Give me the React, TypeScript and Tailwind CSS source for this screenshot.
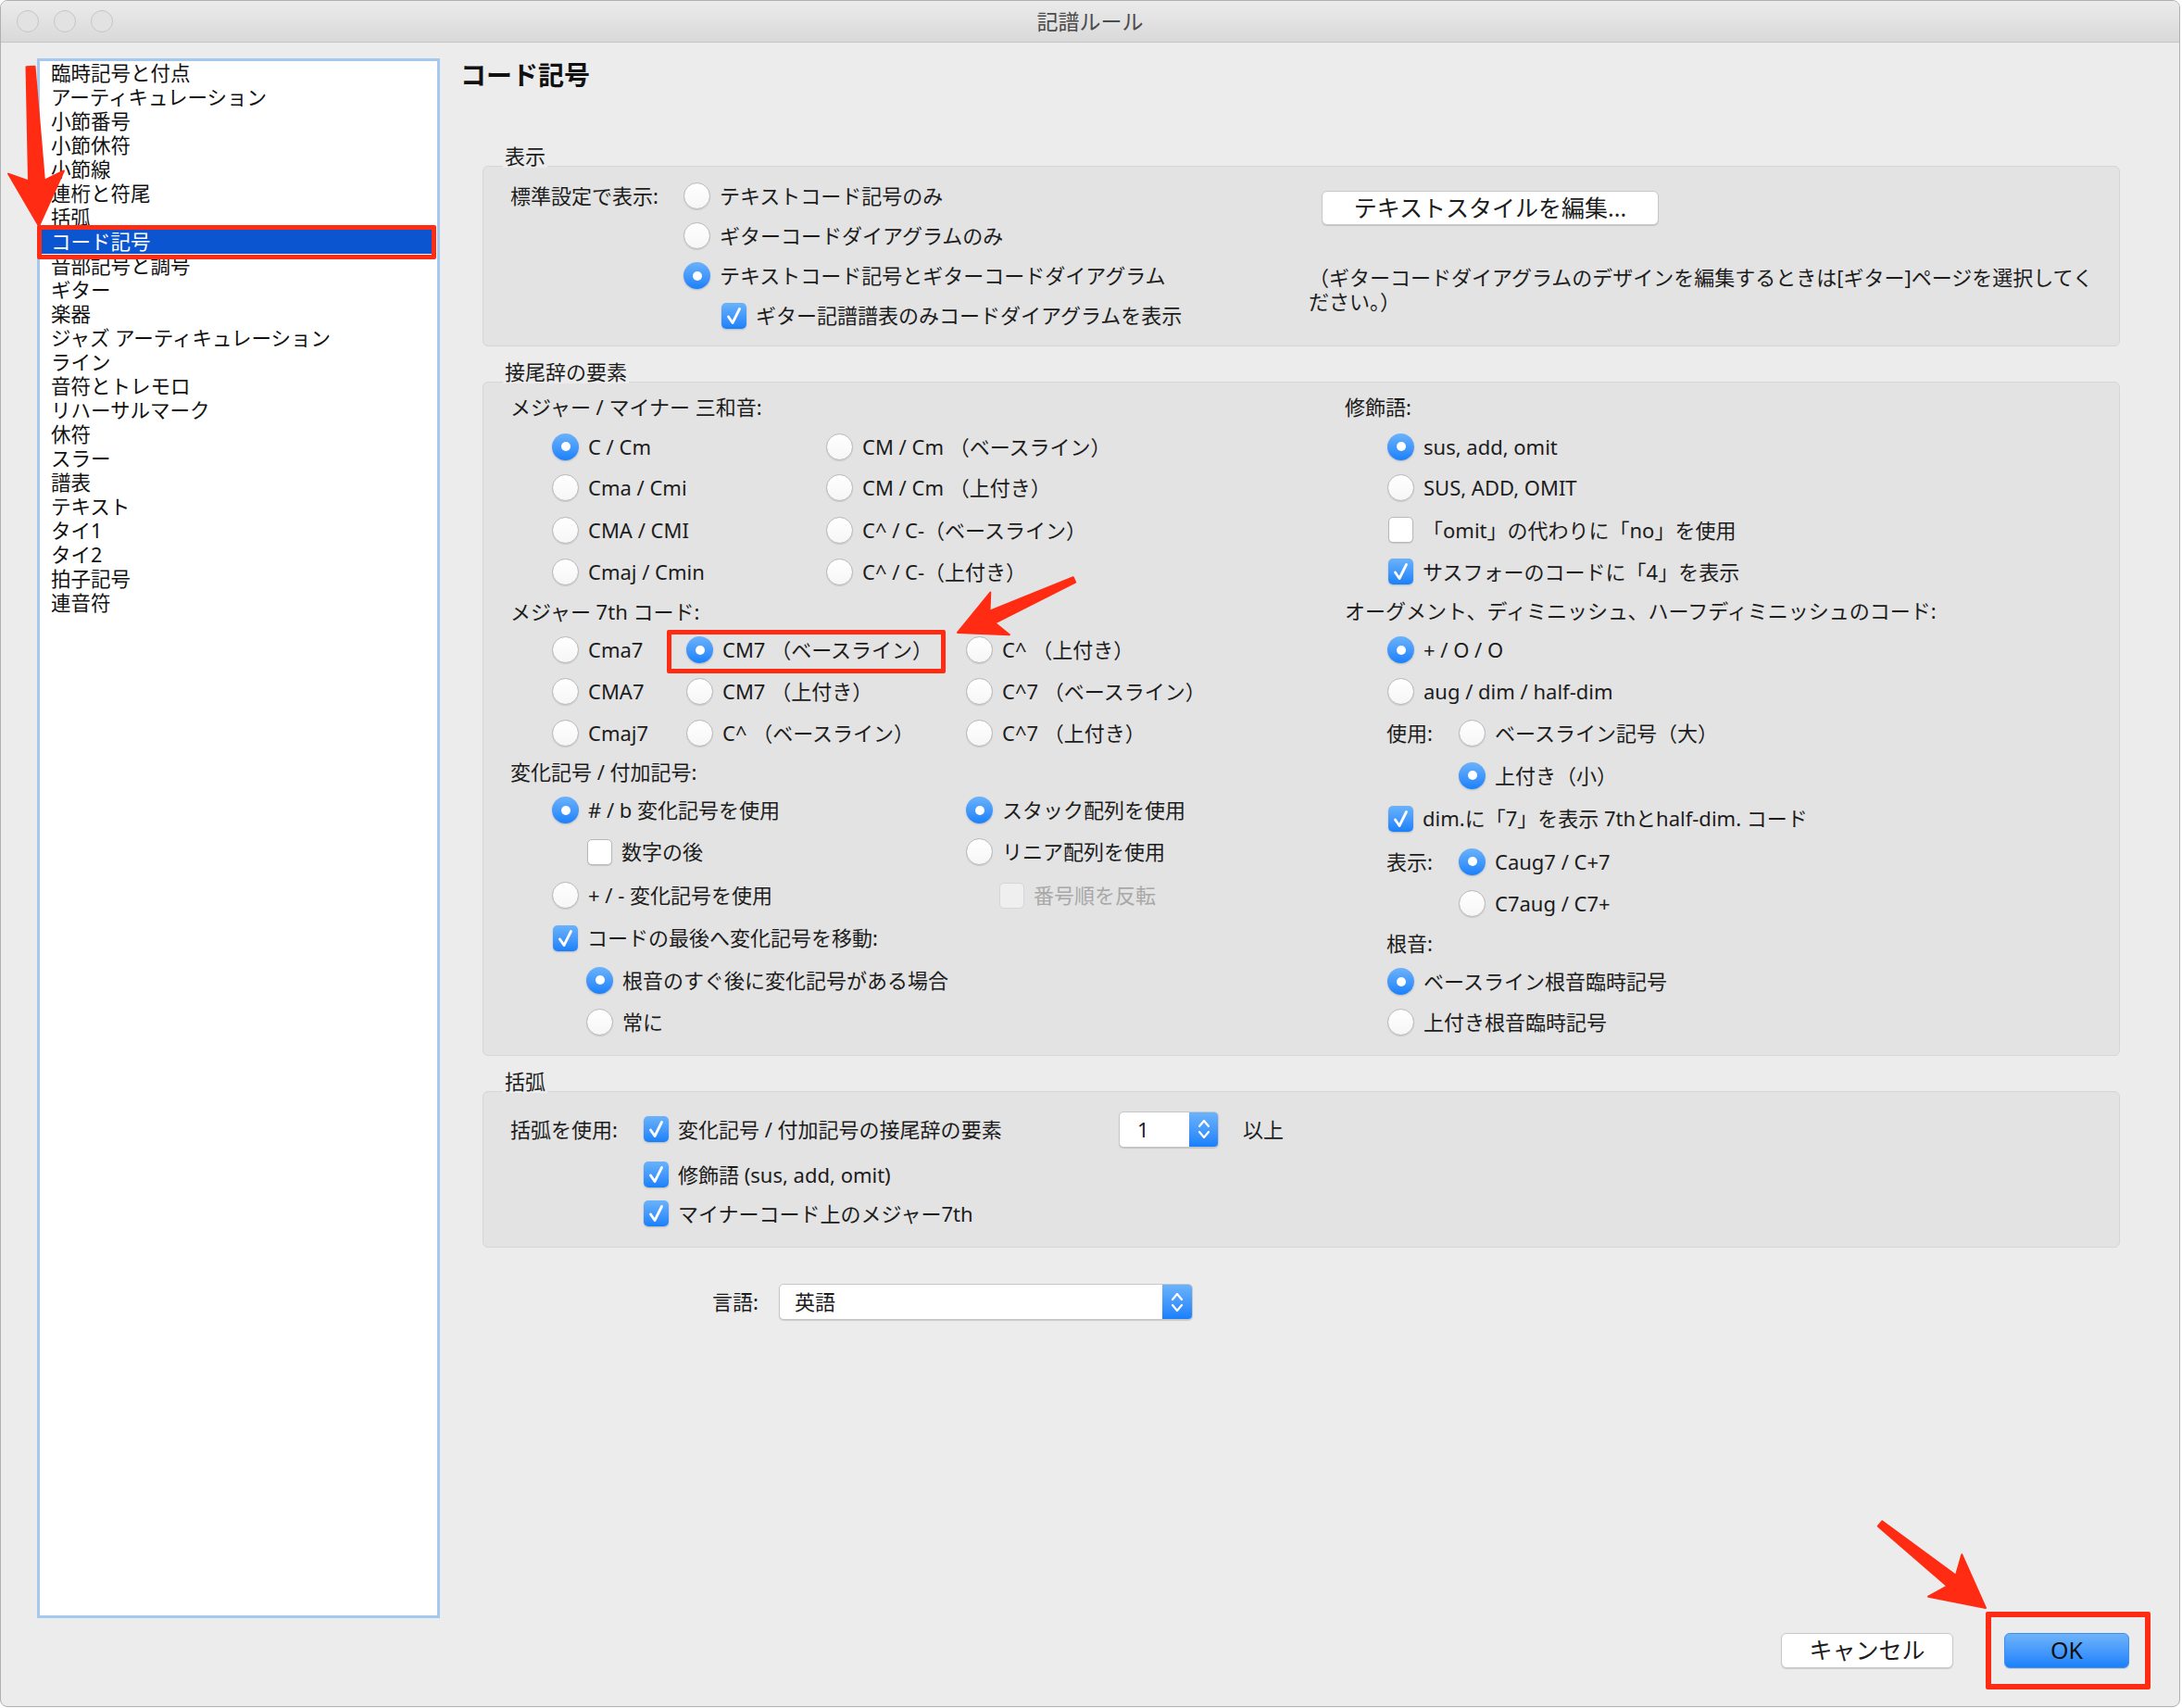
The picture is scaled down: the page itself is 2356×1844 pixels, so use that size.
import React from "react";

const items = [
  "臨時記号と付点",
  "アーティキュレーション",
  "小節番号",
  "小節休符",
  "小節線",
  "連桁と符尾",
  "括弧",
  "コード記号",
  "音部記号と調号",
  "ギター",
  "楽器",
  "ジャズ アーティキュレーション",
  "ライン",
  "音符とトレモロ",
  "リハーサルマーク",
  "休符",
  "スラー",
  "譜表",
  "テキスト",
  "タイ1",
  "タイ2",
  "拍子記号",
  "連音符",
];

function Radio({ on }: { on?: boolean }) {
  if (on)
    return (
      <span className="flex h-[29px] w-[29px] shrink-0 items-center justify-center rounded-full bg-linear-to-b from-[#6ab2fb] to-[#1780fb] shadow-[0_1px_2px_rgba(0,0,0,0.2)]">
        <span className="h-[10px] w-[10px] rounded-full bg-white" />
      </span>
    );
  return (
    <span className="h-[29px] w-[29px] shrink-0 rounded-full border border-[#b8b8b8] bg-linear-to-b from-white to-[#f6f6f6] shadow-[0_1px_1px_rgba(0,0,0,0.12)]" />
  );
}

function Check({ on, dis }: { on?: boolean; dis?: boolean }) {
  if (on)
    return (
      <span className="flex h-[28px] w-[27px] shrink-0 items-center justify-center rounded-[5px] bg-linear-to-b from-[#6ab2fb] to-[#1780fb] shadow-[0_1px_2px_rgba(0,0,0,0.2)]">
        <svg width="27" height="28" viewBox="0 0 27 28">
          <path d="M7.5 15 L12 21.5 L19.5 6.5" fill="none" stroke="white" strokeWidth="2.8" strokeLinecap="round" strokeLinejoin="round" />
        </svg>
      </span>
    );
  if (dis)
    return <span className="h-[28px] w-[27px] shrink-0 rounded-[5px] border border-[#d6d6d6] bg-[#efefef]" />;
  return (
    <span className="h-[28px] w-[27px] shrink-0 rounded-[5px] border border-[#b8b8b8] bg-white shadow-[0_1px_1px_rgba(0,0,0,0.12)]" />
  );
}

function Opt({ r, on, dis, children }: { r?: boolean; on?: boolean; dis?: boolean; children: React.ReactNode }) {
  return (
    <div className="flex items-center">
      {r ? <Radio on={on} /> : <Check on={on} dis={dis} />}
      <span className={dis ? "ml-[10px] whitespace-nowrap text-[#a8a8a8]" : "ml-[10px] whitespace-nowrap"}>{children}</span>
    </div>
  );
}

function Chevrons() {
  return (
    <svg width="18" height="30" viewBox="0 0 18 30">
      <path d="M4 12 L9 6 L14 12" fill="none" stroke="white" strokeWidth="2.2" strokeLinecap="round" strokeLinejoin="round" />
      <path d="M4 18 L9 24 L14 18" fill="none" stroke="white" strokeWidth="2.2" strokeLinecap="round" strokeLinejoin="round" />
    </svg>
  );
}

function Section({ label, box, gap, children }: { label: string; box: string; gap: string; children: React.ReactNode }) {
  return (
    <div className={`ml-[24px] w-[1768px] ${gap}`}>
      <div className="relative z-10 ml-[22px] w-fit bg-[#ececec] px-[2px] leading-[26px]">{label}</div>
      <div className={`-mt-[2px] rounded-[6px] border border-[#d6d6d6] bg-[#e3e3e3] ${box}`}>{children}</div>
    </div>
  );
}

function arrow(tx: number, ty: number, hx: number, hy: number, headLen: number, headW: number, tailW: number, neckW: number) {
  const L = Math.hypot(hx - tx, hy - ty);
  const ux = (hx - tx) / L;
  const uy = (hy - ty) / L;
  const px = -uy;
  const py = ux;
  const bx = hx - ux * headLen;
  const by = hy - uy * headLen;
  const nx = bx + ux * 9;
  const ny = by + uy * 9;
  const p = (x: number, y: number) => `${x.toFixed(1)},${y.toFixed(1)}`;
  return [
    p(tx + (px * tailW) / 2, ty + (py * tailW) / 2),
    p(nx + (px * neckW) / 2, ny + (py * neckW) / 2),
    p(bx + (px * headW) / 2, by + (py * headW) / 2),
    p(hx, hy),
    p(bx - (px * headW) / 2, by - (py * headW) / 2),
    p(nx - (px * neckW) / 2, ny - (py * neckW) / 2),
    p(tx - (px * tailW) / 2, ty - (py * tailW) / 2),
  ].join(" ");
}

export default function App() {
  return (
    <div className="relative h-[1844px] w-[2356px] overflow-hidden bg-white font-['Noto_Sans','Noto_Sans_CJK_JP',sans-serif] text-[22px] text-[#1c1c1c]">
      <div className="flex h-[1843px] w-[2354px] flex-col overflow-hidden rounded-[8px] border border-[#b0b0b0] bg-[#ececec]">
        {/* title bar */}
        <div className="relative flex h-[45px] shrink-0 items-center border-b border-[#c4c4c4] bg-linear-to-b from-[#ebebeb] to-[#d9d9d9]">
          <div className="ml-[17px] flex gap-[16px]">
            <span className="h-[24px] w-[24px] rounded-full border border-[#c6c6c6] bg-[#e2e2e2]" />
            <span className="h-[24px] w-[24px] rounded-full border border-[#c6c6c6] bg-[#e2e2e2]" />
            <span className="h-[24px] w-[24px] rounded-full border border-[#c6c6c6] bg-[#e2e2e2]" />
          </div>
          <div className="absolute inset-x-0 text-center text-[23px] leading-[45px] text-[#4b4b4b]">記譜ルール</div>
        </div>

        <div className="flex flex-1">
          {/* sidebar list */}
          <div className="ml-[39px] mt-[17px] h-[1684px] w-[435px] shrink-0 border-[3px] border-[#a5c8ef] bg-white">
            {items.map((it) => (
              <div
                key={it}
                className={
                  it === "コード記号"
                    ? "mx-[2px] h-[26px] whitespace-nowrap bg-[#0b55d1] pl-[10px] text-[21.5px] leading-[26px] text-white"
                    : "h-[26px] whitespace-nowrap pl-[12px] text-[21.5px] leading-[26px] text-[#111]"
                }
              >
                {it}
              </div>
            ))}
          </div>

          {/* main panel */}
          <div className="flex flex-1 flex-col pl-[22px]">
            <div className="mt-[17px] text-[28px] font-bold leading-[36px] text-[#111]">コード記号</div>

            <Section label="表示" gap="mt-[56px]" box="h-[195px]">
              <div className="flex">
                <div className="w-[891px] shrink-0 pl-[29px] pt-[10px]">
                  <div className="flex h-[43px] items-center">
                    <span className="w-[187px] shrink-0">標準設定で表示:</span>
                    <Opt r>テキストコード記号のみ</Opt>
                  </div>
                  <div className="flex h-[43px] items-center pl-[187px]">
                    <Opt r>ギターコードダイアグラムのみ</Opt>
                  </div>
                  <div className="flex h-[43px] items-center pl-[187px]">
                    <Opt r on>テキストコード記号とギターコードダイアグラム</Opt>
                  </div>
                  <div className="flex h-[43px] items-center pl-[228px]">
                    <Opt on>ギター記譜譜表のみコードダイアグラムを表示</Opt>
                  </div>
                </div>
                <div className="flex flex-col pt-[26px]">
                  <div className="ml-[14px] flex h-[37px] w-[364px] items-center justify-center rounded-[6px] border border-[#c8c8c8] bg-white text-[25px] shadow-[0_1px_1px_rgba(0,0,0,0.15)]">
                    テキストスタイルを編集...
                  </div>
                  <div className="mt-[43px] leading-[26px]">
                    <div className="whitespace-nowrap">（ギターコードダイアグラムのデザインを編集するときは[ギター]ページを選択してく</div>
                    <div>ださい。）</div>
                  </div>
                </div>
              </div>
            </Section>

            <Section label="接尾辞の要素" gap="mt-[14px]" box="h-[728px]">
              <div className="flex pl-[29px] pt-[6px]">
                {/* left column */}
                <div className="w-[901px] shrink-0">
                  <div className="flex h-[41px] items-center">メジャー / マイナー 三和音:</div>
                  <div className="flex h-[44px] items-center pl-[45px]">
                    <div className="w-[296px]"><Opt r on>C / Cm</Opt></div>
                    <Opt r>CM / Cm （ベースライン）</Opt>
                  </div>
                  <div className="flex h-[45px] items-center pl-[45px]">
                    <div className="w-[296px]"><Opt r>Cma / Cmi</Opt></div>
                    <Opt r>CM / Cm （上付き）</Opt>
                  </div>
                  <div className="flex h-[46px] items-center pl-[45px]">
                    <div className="w-[296px]"><Opt r>CMA / CMI</Opt></div>
                    <Opt r>C^ / C-（ベースライン）</Opt>
                  </div>
                  <div className="flex h-[45px] items-center pl-[45px]">
                    <div className="w-[296px]"><Opt r>Cmaj / Cmin</Opt></div>
                    <Opt r>C^ / C-（上付き）</Opt>
                  </div>
                  <div className="flex h-[40px] items-center">メジャー 7th コード:</div>
                  <div className="flex h-[43px] items-center pl-[45px]">
                    <div className="w-[145px]"><Opt r>Cma7</Opt></div>
                    <div className="w-[302px]"><Opt r on>CM7 （ベースライン）</Opt></div>
                    <Opt r>C^ （上付き）</Opt>
                  </div>
                  <div className="flex h-[46px] items-center pl-[45px]">
                    <div className="w-[145px]"><Opt r>CMA7</Opt></div>
                    <div className="w-[302px]"><Opt r>CM7 （上付き）</Opt></div>
                    <Opt r>C^7 （ベースライン）</Opt>
                  </div>
                  <div className="flex h-[45px] items-center pl-[45px]">
                    <div className="w-[145px]"><Opt r>Cmaj7</Opt></div>
                    <div className="w-[302px]"><Opt r>C^ （ベースライン）</Opt></div>
                    <Opt r>C^7 （上付き）</Opt>
                  </div>
                  <div className="flex h-[39px] items-center">変化記号 / 付加記号:</div>
                  <div className="flex h-[43px] items-center pl-[45px]">
                    <div className="w-[447px]"><Opt r on># / b 変化記号を使用</Opt></div>
                    <Opt r on>スタック配列を使用</Opt>
                  </div>
                  <div className="flex h-[47px] items-center pl-[83px]">
                    <div className="w-[409px]"><Opt>数字の後</Opt></div>
                    <Opt r>リニア配列を使用</Opt>
                  </div>
                  <div className="flex h-[47px] items-center pl-[45px]">
                    <div className="w-[483px]"><Opt r>+ / - 変化記号を使用</Opt></div>
                    <Opt dis>番号順を反転</Opt>
                  </div>
                  <div className="flex h-[45px] items-center pl-[46px]">
                    <Opt on>コードの最後へ変化記号を移動:</Opt>
                  </div>
                  <div className="flex h-[46px] items-center pl-[82px]">
                    <Opt r on>根音のすぐ後に変化記号がある場合</Opt>
                  </div>
                  <div className="flex h-[44px] items-center pl-[82px]">
                    <Opt r>常に</Opt>
                  </div>
                </div>

                {/* right column */}
                <div className="flex-1">
                  <div className="flex h-[41px] items-center">修飾語:</div>
                  <div className="flex h-[44px] items-center pl-[46px]"><Opt r on>sus, add, omit</Opt></div>
                  <div className="flex h-[45px] items-center pl-[46px]"><Opt r>SUS, ADD, OMIT</Opt></div>
                  <div className="flex h-[46px] items-center pl-[47px]"><Opt>「omit」の代わりに「no」を使用</Opt></div>
                  <div className="flex h-[44px] items-center pl-[47px]"><Opt on>サスフォーのコードに「4」を表示</Opt></div>
                  <div className="flex h-[41px] items-center whitespace-nowrap">オーグメント、ディミニッシュ、ハーフディミニッシュのコード:</div>
                  <div className="flex h-[43px] items-center pl-[46px]"><Opt r on>+ / O / O</Opt></div>
                  <div className="flex h-[46px] items-center pl-[46px]"><Opt r>aug / dim / half-dim</Opt></div>
                  <div className="flex h-[45px] items-center pl-[45px]">
                    <span className="w-[78px] shrink-0">使用:</span>
                    <Opt r>ベースライン記号（大）</Opt>
                  </div>
                  <div className="flex h-[46px] items-center pl-[123px]"><Opt r on>上付き（小）</Opt></div>
                  <div className="flex h-[47px] items-center pl-[47px]"><Opt on>dim.に「7」を表示 7thとhalf-dim. コード</Opt></div>
                  <div className="flex h-[46px] items-center pl-[45px]">
                    <span className="w-[78px] shrink-0">表示:</span>
                    <Opt r on>Caug7 / C+7</Opt>
                  </div>
                  <div className="flex h-[45px] items-center pl-[123px]"><Opt r>C7aug / C7+</Opt></div>
                  <div className="flex h-[40px] items-center pl-[45px]">根音:</div>
                  <div className="flex h-[43px] items-center pl-[46px]"><Opt r on>ベースライン根音臨時記号</Opt></div>
                  <div className="flex h-[44px] items-center pl-[46px]"><Opt r>上付き根音臨時記号</Opt></div>
                </div>
              </div>
            </Section>

            <Section label="括弧" gap="mt-[14px]" box="h-[169px]">
              <div className="pl-[29px] pt-[18px]">
                <div className="flex h-[44px] items-center">
                  <span className="w-[144px] shrink-0">括弧を使用:</span>
                  <div className="w-[513px] shrink-0"><Opt on>変化記号 / 付加記号の接尾辞の要素</Opt></div>
                  <div className="flex h-[39px] w-[108px] overflow-hidden rounded-[5px] border border-[#c6c6c6] bg-white shadow-[0_1px_1px_rgba(0,0,0,0.15)]">
                    <span className="flex-1 pl-[19px] leading-[37px]">1</span>
                    <span className="flex w-[31px] items-center justify-center bg-linear-to-b from-[#6ab2fb] to-[#1780fb]"><Chevrons /></span>
                  </div>
                  <span className="ml-[26px]">以上</span>
                </div>
                <div className="flex h-[54px] items-center pl-[144px]"><Opt on>修飾語 (sus, add, omit)</Opt></div>
                <div className="flex h-[30px] items-center pl-[144px]"><Opt on>マイナーコード上のメジャー7th</Opt></div>
              </div>
            </Section>

            <div className="mt-[39px] flex h-[39px] items-center pl-[272px]">
              <span className="w-[72px] shrink-0">言語:</span>
              <div className="flex h-[39px] w-[447px] overflow-hidden rounded-[5px] border border-[#c6c6c6] bg-white shadow-[0_1px_1px_rgba(0,0,0,0.15)]">
                <span className="flex-1 pl-[16px] leading-[37px]">英語</span>
                <span className="flex w-[32px] items-center justify-center bg-linear-to-b from-[#6ab2fb] to-[#1780fb]"><Chevrons /></span>
              </div>
            </div>

            <div className="flex-1" />

            <div className="mb-[41px] flex justify-end gap-[55px] pr-[54px]">
              <div className="flex h-[38px] w-[186px] items-center justify-center rounded-[6px] border border-[#c8c8c8] bg-white text-[25px] shadow-[0_1px_1px_rgba(0,0,0,0.15)]">
                キャンセル
              </div>
              <div className="flex h-[38px] w-[135px] items-center justify-center rounded-[6px] border border-[#3d8ef0] bg-linear-to-b from-[#6db3fa] to-[#1780fb] text-[25px] text-[#111] shadow-[0_1px_1px_rgba(0,0,0,0.15)]">
                OK
              </div>
            </div>
          </div>
        </div>
      </div>

      {/* annotations */}
      <div className="absolute left-[40px] top-[243px] h-[37px] w-[431px] rounded-[2px] border-[5px] border-[#ff2b12]" />
      <div className="absolute left-[720px] top-[680px] h-[47px] w-[301px] rounded-[2px] border-[5px] border-[#ff2b12]" />
      <div className="absolute left-[2144px] top-[1740px] h-[84px] w-[178px] rounded-[2px] border-[6px] border-[#ff2b12]" />
      <svg className="pointer-events-none absolute left-0 top-0" width="2356" height="1844">
        <g fill="#ff2b12" stroke="#ff2b12" strokeWidth="2" strokeLinejoin="round">
          <polygon points={arrow(33, 72, 42, 244, 58, 60, 9, 17)} />
          <polygon points={arrow(1160, 626, 1034, 683, 50, 50, 6, 14)} />
          <polygon points={arrow(2030, 1645, 2144, 1736, 56, 58, 7, 15)} />
        </g>
      </svg>
    </div>
  );
}
